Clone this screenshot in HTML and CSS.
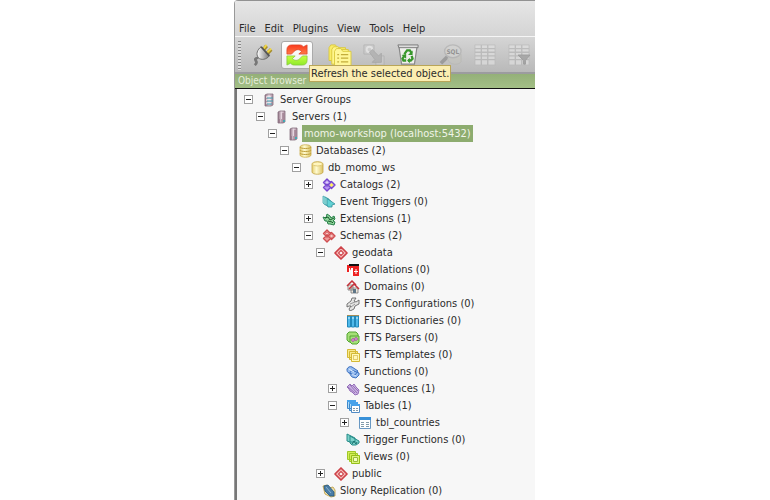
FILE: index.html
```
<!DOCTYPE html>
<html lang="en">
<head>
<meta charset="utf-8">
<title>Object browser</title>
<link rel="stylesheet" href="styles.css">
</head>
<body>
<svg class="sprites" aria-hidden="true">
  <defs>
    <linearGradient id="gold"><stop offset="0" stop-color="#e6cf72"/><stop offset=".4" stop-color="#fffbd0"/><stop offset="1" stop-color="#dcc262"/></linearGradient>
    <linearGradient id="steel"><stop offset="0" stop-color="#8d6f80"/><stop offset=".5" stop-color="#e5d5df"/><stop offset="1" stop-color="#a98a9b"/></linearGradient>
    <linearGradient id="metal"><stop offset="0" stop-color="#fff"/><stop offset="1" stop-color="#777"/></linearGradient>
    <linearGradient id="red" x2="0" y2="1"><stop offset="0" stop-color="#fb3a1c"/><stop offset="1" stop-color="#ff7a4a"/></linearGradient>
    <linearGradient id="lime" x2="0" y2="1"><stop offset="0" stop-color="#c6ff3e"/><stop offset="1" stop-color="#8fea2c"/></linearGradient>
  </defs>
  <symbol id="group" viewBox="0 0 14 14"><path d="M3 2l2-1h6v11l-2 1H3z" fill="url(#steel)" stroke="#85707e" stroke-width=".8"/><path d="M4 4h5M4 7h5M4 10h5" stroke="#fff"/><path d="M5 5h6M5 8h6M5 11h5" stroke="#3f9fb1"/></symbol>
  <symbol id="server" viewBox="0 0 14 14"><path d="M4 2l2-1h5v11l-2 1H4z" fill="url(#steel)" stroke="#85707e" stroke-width=".8"/><path d="M9 3v10" stroke="#8a687b"/><path d="M5 10h3M5 12h3" stroke="#8a687b" stroke-dasharray="1 1"/><path d="M9 10h2v2H9z" fill="#43a9b3"/></symbol>
  <symbol id="databases" viewBox="0 0 14 14"><path d="M2 3c0-3 11-3 11 0v8c0 3-11 3-11 0z" fill="url(#gold)" stroke="#cdb052" stroke-width=".8"/><path d="M2 3c0 2 11 2 11 0M2 6c0 2 11 2 11 0M2 9c0 2 11 2 11 0" fill="none" stroke="#bf9f3c"/></symbol>
  <symbol id="database" viewBox="0 0 14 14"><path d="M2 3c0-3 11-3 11 0v8c0 3-11 3-11 0z" fill="url(#gold)" stroke="#c3a545" stroke-width=".8"/><ellipse cx="7.500" cy="3" rx="5" ry="2" fill="#fff5bd" stroke="#cdb052" stroke-width=".6"/></symbol>
  <symbol id="catalogs" viewBox="0 0 14 14"><path d="M5 1l3.500 3.500L5 8 1.500 4.500zM5 6l3.500 3.500L5 13 1.500 9.500zM9.500 3.500L13 7l-3.500 3.500L6 7z" fill="#b596f0" stroke="#7647cf" stroke-width="1.400" stroke-linejoin="round"/><path d="M5 3l1.500 1.500L5 6 3.500 4.500z" fill="#ded0fa"/><path d="M9.500 5L11.500 7l-2 2-2-2z" fill="#fff05b"/></symbol>
  <symbol id="triggers" viewBox="0 0 14 14"><path d="M1 1l6 3v6H3L1 8zM3 2l6 4v5H5L3 9z" fill="#9ee8e5" stroke="#48a5ad" stroke-width=".8"/><path d="M5 3.500L13 9l-3 1v2H6L5 10z" fill="#62d2d5" stroke="#338f99" stroke-width=".8"/></symbol>
  <symbol id="extensions" viewBox="0 0 14 14"><path d="M1 5l3 1 1-4 3 2 1 2 3-2 1 3-2 2 2 1-1 3-4-1-2 0-1-3-2 0z" fill="#8fd49a" stroke="#27804a"/><path d="M3 6l3-1 2 3 4-2M6 9l4 1 1 1" fill="none" stroke="#175b2a"/></symbol>
  <symbol id="schemas" viewBox="0 0 14 14"><path d="M5 1l3.500 3.500L5 8 1.500 4.500zM5 6l3.500 3.500L5 13 1.500 9.500zM9.500 3.500L13 7l-3.500 3.500L6 7z" fill="#ef9c9b" stroke="#cf4e51" stroke-width="1.400" stroke-linejoin="round"/><path d="M5 3l1.500 1.500L5 6 3.500 4.500zM9.500 5l2 2-2 2-2-2z" fill="#f8c8c4" stroke="#cf4e51" stroke-width=".6"/></symbol>
  <symbol id="schema" viewBox="0 0 14 14"><path d="M7 1l6 6-6 6-6-6z" fill="#f8c5c3" stroke="#ce4248" stroke-width="1.700" stroke-linejoin="round"/><path d="M7 4.500L9.500 7 7 9.500 4.500 7z" fill="#fff" stroke="#d15055" stroke-width="1.300"/></symbol>
  <symbol id="collations" viewBox="0 0 14 14"><path d="M1 2h12v11H5V6L3 9H1z" fill="#ee2222"/><path d="M3 1h10v2H3z" fill="#111"/><path d="M3 5h1v5H3zM5 5h2v8H5z" fill="#fff"/><path d="M10 6v5M8 8.500h4" stroke="#fff"/></symbol>
  <symbol id="domains" viewBox="0 0 14 14"><path d="M2 5h5v5H2zM5 8h7v5H5z" fill="#efe7db" stroke="#777" stroke-width=".8"/><path d="M1 6l5-5 4 4M3 9l5-5 5 5" fill="none" stroke="#c5313a" stroke-width="1.500"/><path d="M7 9h3v4H7z" fill="#5e7687"/></symbol>
  <symbol id="config" viewBox="0 0 14 14"><path d="M1 7l4-3 1-3 4 0-2 3 2 1 3-2v4l-4 2-1 3-4 2-1-2 2-3-2 0-2 1z" fill="#e5e5e4" stroke="#686868" stroke-width=".9"/><path d="M4 7l5-2M5 10l4-3" stroke="#777" stroke-width=".7"/></symbol>
  <symbol id="dict" viewBox="0 0 14 14"><path d="M1.500 2h3v11h-3zM5.500 2h3v11h-3zM9.500 2h3v11h-3z" fill="#4fb9ea" stroke="#2188ba"/><path d="M1 1.500h12" stroke="#a48c55"/><path d="M2 4h2M6 4h2M10 4h2" stroke="#d8f2fc"/></symbol>
  <symbol id="parsers" viewBox="0 0 14 14"><path d="M1 3l2-2h7l2 2v6l-2 2H3L1 9z" fill="#a5df77" stroke="#55a532"/><path d="M4 5h9v6l-2 2H6l-2-2z" fill="#a2e07a" stroke="#55a532"/><circle cx="7" cy="9" r="1.300" fill="#f9dcf5" stroke="#a442a2"/><circle cx="10" cy="8" r="1.300" fill="#f9dcf5" stroke="#a442a2"/></symbol>
  <symbol id="templates" viewBox="0 0 14 14"><path d="M1.500 1.500h8v8h-8zM3.500 3.500h8v8h-8z" fill="#f8e98b" stroke="#d4b935"/><path d="M5.500 5.500h8v8h-8z" fill="#fff9b8" stroke="#d4b935"/><path d="M7.500 7.500h4v4h-4z" fill="none" stroke="#c49e21" stroke-dasharray="1 1"/></symbol>
  <symbol id="functions" viewBox="0 0 14 14"><path d="M1 4c1-2 3-3 5-2l6 4-3 4-6-2c-2-1-2-2-2-4zM4 8c0-2 2-3 4-2l5 2v2l-3 3-4-1c-1-1-2-2-2-4z" fill="#97bdf0" stroke="#3c70bf"/><path d="M3 4l5 3M6 9l4 2" stroke="#dbeafd"/></symbol>
  <symbol id="sequences" viewBox="0 0 14 14"><path d="M1 5l3-3 2 2 2-2 2 3 3 3-1 4-3 1-3-3-2-1-1-2z" fill="#c9b0e2" stroke="#946eb8"/><path d="M4 3l7 8M2 5l7 6M7 4l5 5" stroke="#8058a5" stroke-width=".7"/></symbol>
  <symbol id="tables" viewBox="0 0 14 14"><path d="M1.500 1.500h8v8h-8zM3.500 3.500h8v8h-8z" fill="#acdaf7" stroke="#3e88cb"/><path d="M5.500 5.500h8v8h-8z" fill="#fff" stroke="#518bc5"/><path d="M1 2h9M3 4h9M5 6h9" stroke="#48a2ea" stroke-width="2"/><path d="M7 9.500h2M10 9.500h2M7 11.500h2M10 11.500h2" stroke="#829baa"/></symbol>
  <symbol id="table" viewBox="0 0 14 14"><path d="M1.500 1.500h11v11h-11z" fill="#fff" stroke="#6998c3"/><path d="M1 2.500h12" stroke="#3991d8" stroke-width="3"/><path d="M3 6.500h3M8 6.500h3M3 8.500h3M8 8.500h3M3 10.500h3M8 10.500h3" stroke="#829baa"/></symbol>
  <symbol id="trigfn" viewBox="0 0 14 14"><path d="M1 1l8 4v4H4L1 8zM4 3l9 5v2l-3 2H6L4 10z" fill="#7dd2ca" stroke="#278c89"/><path d="M6 11l2-3 2 3 1-2" fill="none" stroke="#19716c"/></symbol>
  <symbol id="views" viewBox="0 0 14 14"><path d="M1.500 1.500h8v8h-8zM3.500 3.500h8v8h-8z" fill="#d4ed58" stroke="#9fc828"/><path d="M5.500 5.500h8v8h-8z" fill="#def57c" stroke="#94be18"/><path d="M7.500 7.500h4v4h-4z" fill="#f2ffc2" stroke="#9aba38"/></symbol>
  <symbol id="slony" viewBox="0 0 14 14"><path d="M1 2l4-1 2 3 4-1 2 3v6l-4 1-6-3z" fill="#efe2ae" stroke="#c5aa5b"/><path d="M2 2l4-1 6 7v4H8L3 7z" fill="#4a7da6" stroke="#25577f" stroke-width=".8"/><path d="M4 3l5 6" stroke="#8cb4cf"/></symbol>
</svg>
<main class="desktop">
  <section class="window">
    <header class="caption">
      <nav class="menu" aria-label="Main">
        <button>File</button><button>Edit</button><button>Plugins</button><button>View</button><button>Tools</button><button>Help</button>
      </nav>
    </header>
    <div class="toolbar" role="toolbar" aria-label="Tools">
      <span class="grip"></span>
      <button class="tool" aria-label="Connect"><svg viewBox="0 0 24 24"><path d="M13 7l4-5M17 11l5-5" stroke="#a78e2b" stroke-width="4"/><path d="M13 6l4-5M17 10l5-5" stroke="#f1d746" stroke-width="2"/><path d="M11 3l9 10c-3 4-9 5-12 2-3-4-1-9 3-12z" fill="url(#metal)" stroke="#666"/><path d="M11 3l9 10" stroke="#555" stroke-width="2"/><path d="M8 15c-6 1-2 3-2 5s-1 2-2 3" fill="none" stroke="#777" stroke-width="3"/></svg></button>
      <button class="tool active" aria-label="Refresh"><svg viewBox="0 0 24 24"><path d="M1 11V6c0-3 2-5 5-5h9c2 0 3 1 4 2l4-2v10h-9l3-3c-3-3-7-2-9 1l-2 2z" fill="url(#red)" stroke="#dc4529" stroke-width=".8"/><path d="M23 13v5c0 3-2 5-5 5H9c-2 0-3-1-4-2l-4 2V13h9l-3 3c3 3 7 2 9-1l2-2z" fill="url(#lime)" stroke="#84c53c" stroke-width=".8"/></svg>
        <span class="tooltip" role="tooltip">Refresh the selected object.</span></button>
      <span class="gap"></span>
      <button class="tool" aria-label="Properties"><svg viewBox="0 0 24 24"><path d="M0 4l2-3h5l2 3h9v14H0z" fill="#f9ec68" stroke="#dac83c"/><path d="M3 6l2-3h5l2 3h9v16H3z" fill="#fff68d" stroke="#dac83c"/><path d="M6 8l2-3h5l2 3h9v16H6z" fill="#fff797" stroke="#dac83c"/><path d="M9 11.500h2M13 11.500h8M9 15.500h2M13 15.500h8M9 19.500h2M13 19.500h8" stroke="#c3ad3b" stroke-width="1.300"/></svg></button>
      <button class="tool" disabled aria-label="Create"><svg viewBox="0 0 24 24"><path d="M1 1h11v10H1zM14 13h9v10h-9z" fill="#ccc" stroke="#aaa"/><circle cx="7" cy="6" r="3" fill="none" stroke="#eee" stroke-width="2"/><path d="M7 9l3-3 7 7 3-3v10H10l3-3z" fill="#aaa" stroke="#999"/></svg></button>
      <button class="tool" aria-label="Drop"><svg viewBox="0 0 24 24"><path d="M2 2h20l-3 20H5z" fill="#efefed" stroke="#888" stroke-width="1.300"/><path d="M1 1h22v3H2z" fill="#ddd" stroke="#777"/><path d="M8 11l3-4h3l2 3M16 13l1 3-2 2h-3M10 18H7l-1-2 2-3" fill="none" stroke="#38972c" stroke-width="2.500"/><path d="M17 7v5h-5zM14 15v6l-3-3zM5 12l5-1v5z" fill="#38972c"/></svg></button>
      <span class="gap"></span>
      <button class="tool" disabled aria-label="Query"><svg viewBox="0 0 24 24"><path d="M8 14l-7 7" stroke="#888" stroke-width="4"/><path d="M8 16c2 8 14 7 15 3v-8" fill="#c4c4be" stroke="#b5b5b0"/><ellipse cx="14" cy="8" rx="9" ry="7" fill="#d5d5d3" stroke="#aeaeae" stroke-width="1.500"/><text x="14" y="11" class="sql">SQL</text></svg></button>
      <button class="tool" disabled aria-label="View data"><svg viewBox="0 0 24 24"><path d="M1 1h22v22H1z" fill="#e2e2e2" stroke="#b7b7b7"/><path d="M1 5h22M1 9h22M1 13h22M1 17h22M8 1v22M15 1v22" stroke="#b5b5b5" stroke-width="1.500"/></svg></button>
      <button class="tool" disabled aria-label="Filter data"><svg viewBox="0 0 24 24"><path d="M1 1h22v22H1z" fill="#e2e2e2" stroke="#b7b7b7"/><path d="M1 5h22M1 9h22M1 13h22M1 17h22M8 1v22M15 1v22" stroke="#b5b5b5" stroke-width="1.500"/><path d="M11 12h13l-5 6v4h-2v-4z" fill="#999" stroke="#888"/></svg></button>
    </div>
    <h1 class="title">Object browser</h1>
    <ul class="tree">
      <li><div class="row"><button class="toggle" aria-label="Collapse"></button><svg class="icon"><use href="#group"/></svg><span class="label">Server Groups</span></div>
      <ul><li><div class="row"><button class="toggle" aria-label="Collapse"></button><svg class="icon"><use href="#server"/></svg><span class="label">Servers (1)</span></div>
      <ul><li><div class="row"><button class="toggle" aria-label="Collapse"></button><svg class="icon"><use href="#server"/></svg><span class="label selected">momo-workshop (localhost:5432)</span></div>
      <ul><li><div class="row"><button class="toggle" aria-label="Collapse"></button><svg class="icon"><use href="#databases"/></svg><span class="label">Databases (2)</span></div>
      <ul><li><div class="row"><button class="toggle" aria-label="Collapse"></button><svg class="icon"><use href="#database"/></svg><span class="label">db_momo_ws</span></div>
      <ul>
        <li><div class="row"><button class="toggle closed" aria-label="Expand"></button><svg class="icon"><use href="#catalogs"/></svg><span class="label">Catalogs (2)</span></div></li>
        <li><div class="row leaf"><svg class="icon"><use href="#triggers"/></svg><span class="label">Event Triggers (0)</span></div></li>
        <li><div class="row"><button class="toggle closed" aria-label="Expand"></button><svg class="icon"><use href="#extensions"/></svg><span class="label">Extensions (1)</span></div></li>
        <li><div class="row"><button class="toggle" aria-label="Collapse"></button><svg class="icon"><use href="#schemas"/></svg><span class="label">Schemas (2)</span></div>
        <ul>
          <li><div class="row"><button class="toggle" aria-label="Collapse"></button><svg class="icon"><use href="#schema"/></svg><span class="label">geodata</span></div>
          <ul>
            <li><div class="row leaf"><svg class="icon"><use href="#collations"/></svg><span class="label">Collations (0)</span></div></li>
            <li><div class="row leaf"><svg class="icon"><use href="#domains"/></svg><span class="label">Domains (0)</span></div></li>
            <li><div class="row leaf"><svg class="icon"><use href="#config"/></svg><span class="label">FTS Configurations (0)</span></div></li>
            <li><div class="row leaf"><svg class="icon"><use href="#dict"/></svg><span class="label">FTS Dictionaries (0)</span></div></li>
            <li><div class="row leaf"><svg class="icon"><use href="#parsers"/></svg><span class="label">FTS Parsers (0)</span></div></li>
            <li><div class="row leaf"><svg class="icon"><use href="#templates"/></svg><span class="label">FTS Templates (0)</span></div></li>
            <li><div class="row leaf"><svg class="icon"><use href="#functions"/></svg><span class="label">Functions (0)</span></div></li>
            <li><div class="row"><button class="toggle closed" aria-label="Expand"></button><svg class="icon"><use href="#sequences"/></svg><span class="label">Sequences (1)</span></div></li>
            <li><div class="row"><button class="toggle" aria-label="Collapse"></button><svg class="icon"><use href="#tables"/></svg><span class="label">Tables (1)</span></div>
            <ul><li><div class="row"><button class="toggle closed" aria-label="Expand"></button><svg class="icon"><use href="#table"/></svg><span class="label">tbl_countries</span></div></li></ul></li>
            <li><div class="row leaf"><svg class="icon"><use href="#trigfn"/></svg><span class="label">Trigger Functions (0)</span></div></li>
            <li><div class="row leaf"><svg class="icon"><use href="#views"/></svg><span class="label">Views (0)</span></div></li>
          </ul></li>
          <li><div class="row"><button class="toggle closed" aria-label="Expand"></button><svg class="icon"><use href="#schema"/></svg><span class="label">public</span></div></li>
        </ul></li>
        <li><div class="row leaf"><svg class="icon"><use href="#slony"/></svg><span class="label">Slony Replication (0)</span></div></li>
      </ul></li></ul></li></ul></li></ul></li></ul></li>
    </ul>
  </section>
</main>
</body>
</html>
```
FILE: styles.css
```
* { box-sizing: border-box; }
body {
  margin: 0;
  background: #fff;
  color: #2b2b2b;
  font: 11px/17px "DejaVu Sans Condensed", "DejaVu Sans", sans-serif;
}
button { padding: 0; border: 0; background: none; color: inherit; font: inherit; }
ul { margin: 0; padding: 0; list-style: none; }
.sprites { position: absolute; width: 0; height: 0; }
.desktop {
  display: grid;
  grid-template-columns: 234fr 301fr 235fr;
  min-height: 100vh;
}
.window {
  grid-column: 2;
  display: flex;
  flex-direction: column;
  min-width: 0;
  overflow: hidden;
  border-left: 1px solid #999;
  border-top-left-radius: 4px;
}
.caption {
  height: 36px;
  padding: 19px 0 0 4px;
  border-top: 1px solid #929292;
  background: linear-gradient(#e6e6e6, #d4d4d4);
}
.menu { display: flex; gap: 9px; }
.menu button { white-space: nowrap; }
.toolbar {
  display: flex;
  align-items: center;
  height: 38px;
  padding: 1px 0 0 3px;
  border-top: 1px solid #f5f5f5;
  border-bottom: 2px solid #9c9c9f;
  background: linear-gradient(#d5d5d5, #b9b9b9);
}
.grip {
  flex: none;
  width: 3px;
  height: 29px;
  margin-right: 4px;
  background: repeating-linear-gradient(#888 0 1px, #ddd 1px 3px);
}
.tool {
  flex: none;
  display: grid;
  place-items: center;
  width: 34px;
  height: 28px;
  border: 1px solid transparent;
  border-radius: 3px;
}
.tool svg { width: 24px; height: 22px; }
.tool:disabled svg { opacity: .65; }
.tool.active { position: relative; width: 32px; margin: 0 1px 0 2px; border-color: #aaa; background: linear-gradient(#fff, #eee); }
.gap { flex: none; width: 9px; }
.sql { fill: #777; font-size: 7px; font-weight: bold; text-anchor: middle; }
.tooltip {
  position: absolute;
  z-index: 2;
  top: 23px;
  left: 27px;
  padding: 0 1px;
  border: 1px solid #b9a558;
  background: #fbeeb1;
  white-space: nowrap;
  line-height: 15px;
}
.title {
  margin: 0;
  padding-left: 3px;
  border-bottom: 1px solid #111;
  background: linear-gradient(#94b078, #a3bf86);
  color: #e6edda;
  font-size: 10px;
  font-weight: normal;
  line-height: 14px;
}
.tree {
  flex: 1;
  padding: 2px 0 0 7px;
  border-left: 2px solid #777;
  background: #f7f7f7;
}
.tree ul { padding-left: 12px; }
.row { display: flex; align-items: center; height: 17px; }
.leaf { padding-left: 9px; }
.toggle {
  flex: none;
  width: 9px;
  height: 9px;
  border: 1px solid #a0a0a0;
  background: linear-gradient(#222, #222) center / 5px 1px no-repeat, #fff;
}
.toggle.closed {
  background: linear-gradient(#222, #222) center / 5px 1px no-repeat, linear-gradient(#222, #222) center / 1px 5px no-repeat, #fff;
}
.icon { flex: none; width: 14px; height: 14px; margin: 0 2px 0 9px; }
.label { padding: 0 2px; white-space: nowrap; }
.selected { background: #8dac6f; color: #f0f4e8; }
```
